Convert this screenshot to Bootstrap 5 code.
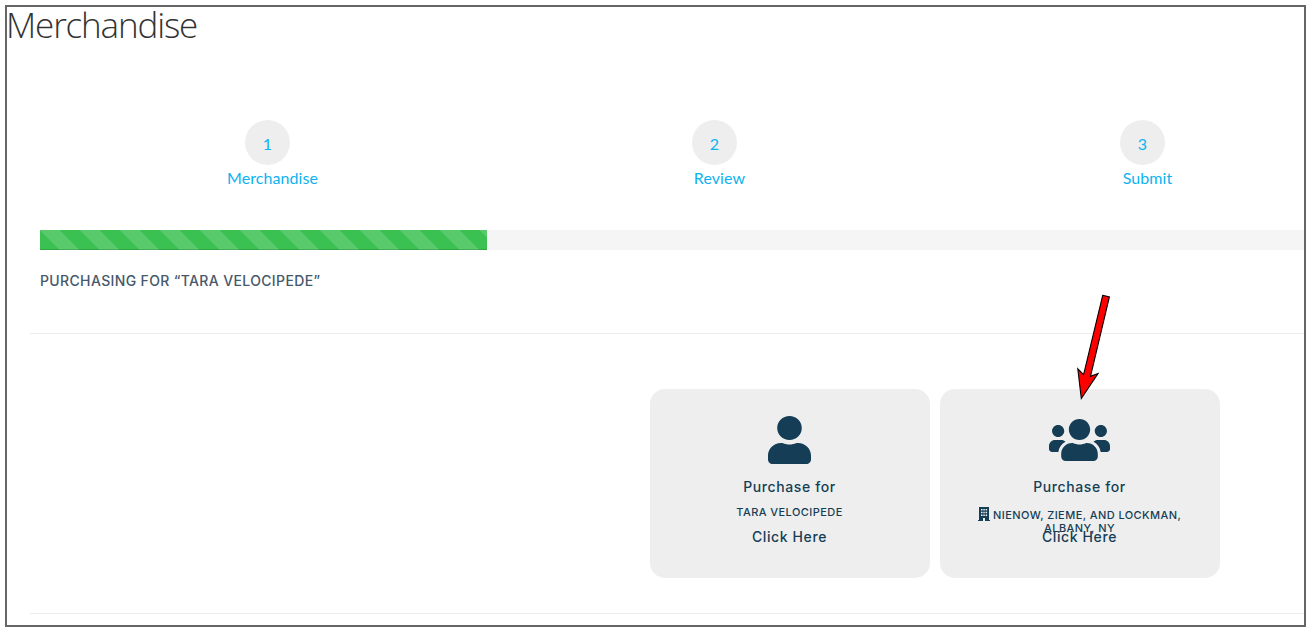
<!DOCTYPE html>
<html lang="en">
<head>
  <meta charset="UTF-8">
  <meta name="viewport" content="width=device-width, initial-scale=1.0">
  <title>Merchandise</title>
  <!-- Bootstrap CSS -->
  <link href="https://cdn.jsdelivr.net/npm/bootstrap@5.3.0/dist/css/bootstrap.min.css" rel="stylesheet">
  <style>
    body {
      height: 100vh;
      padding: 5px;
      background-color: #fff;
      font-family: "Lato", sans-serif;
      overflow: hidden;
    }

    .page-frame {
      height: 622px;
      border: 2px solid #666;
    }

    .page-title {
      height: 113px;
      margin: 0 0 0 -1px;
      font-family: "Open Sans", sans-serif;
      font-size: 35px;
      font-weight: 300;
      line-height: 35px;
      letter-spacing: -1.15px;
      color: #333;
    }

    /* The wizard is wider than the frame and runs off its right edge */
    .wizard {
      width: 1341px;
      margin-left: 33px;
    }

    .steps {
      display: grid;
      grid-template-columns: 465px 429px 427px;
      height: 110px;
    }

    .step {
      font-size: 16px;
      line-height: 20px;
      letter-spacing: 0.08px;
      color: #0db3f0;
      text-decoration: none;
    }

    .step-number {
      width: 45px;
      height: 45px;
      margin-right: 10px;
      margin-bottom: 3px;
      padding-top: 3px;
      background-color: #eee;
    }

    .wizard .progress {
      height: 20px;
      background-color: #f5f5f5;
    }

    .wizard .progress-bar {
      background-color: #3bc151;
      background-size: 40px 40px;
      box-shadow: inset 0 -1px 0 rgba(0, 0, 0, 0.15);
    }

    .heading-font {
      font-family: "Inter", sans-serif;
      font-weight: 500;
    }

    .purchasing {
      height: 83px;
      padding-top: 21px;
      margin: 0;
      font-size: 14px;
      line-height: 20px;
      letter-spacing: 0.36px;
      color: #46586a;
    }

    .divider {
      height: 1px;
      margin-left: 23px;
      background-color: #ececec;
    }

    .choices {
      height: 279px;
      gap: 10px;
      padding-top: 55px;
      padding-left: 643px;
    }

    .choice {
      width: 280px;
      height: 189px;
      padding-top: 27px;
      padding-right: 1px;
      border-radius: 15px;
      background-color: #eee;
      color: #153e56;
      text-decoration: none;
    }

    .choice-icon {
      height: 48px;
      fill: #153e56;
    }

    .choice-line {
      font-size: 14px;
      line-height: 20px;
      letter-spacing: 0.6px;
    }

    .choice-icon + .choice-line {
      margin-top: 13px;
    }

    .choice-name {
      height: 30px;
      width: 240px;
      padding-top: 9px;
      font-size: 11px;
      line-height: 13px;
      letter-spacing: 0.43px;
    }

    .choice-name.with-icon {
      padding-top: 12px;
    }

    .name-icon {
      width: 12px;
      height: 14px;
      margin: -5px 0 0 0;
      fill: #153e56;
    }

    .pointer {
      top: 290px;
      left: 1070px;
      width: 45px;
      height: 115px;
    }
  </style>
</head>
<body>
  <div class="page-frame overflow-hidden">
    <h1 class="page-title">Merchandise</h1>

    <div class="wizard">
      <div class="steps">
        <a href="#" class="step d-flex flex-column align-items-center">
          <span class="step-number rounded-circle d-flex align-items-center justify-content-center">1</span>
          <span>Merchandise</span>
        </a>
        <a href="#" class="step d-flex flex-column align-items-center">
          <span class="step-number rounded-circle d-flex align-items-center justify-content-center">2</span>
          <span>Review</span>
        </a>
        <a href="#" class="step d-flex flex-column align-items-center">
          <span class="step-number rounded-circle d-flex align-items-center justify-content-center">3</span>
          <span>Submit</span>
        </a>
      </div>

      <div class="progress rounded-0">
        <div class="progress-bar progress-bar-striped" role="progressbar" style="width: 33.33%"></div>
      </div>

      <h2 class="purchasing heading-font">PURCHASING FOR “TARA VELOCIPEDE”</h2>
    </div>

    <div class="divider"></div>

    <div class="choices d-flex align-items-start">
      <a href="#" class="choice heading-font d-flex flex-column align-items-center text-center flex-shrink-0">
        <svg class="choice-icon flex-shrink-0" width="43" viewBox="0 0 448 512" preserveAspectRatio="none"><path d="M224 256c70.7 0 128-57.3 128-128S294.7 0 224 0 96 57.3 96 128s57.3 128 128 128zm89.6 32h-16.7c-22.2 10.2-46.9 16-72.9 16s-50.6-5.8-72.9-16h-16.7C60.2 288 0 348.2 0 422.4V464c0 26.5 21.5 48 48 48h352c26.5 0 48-21.5 48-48v-41.6c0-74.2-60.2-134.4-134.4-134.4z"/></svg>
        <div class="choice-line">Purchase for</div>
        <div class="choice-name">TARA VELOCIPEDE</div>
        <div class="choice-line">Click Here</div>
      </a>
      <a href="#" class="choice heading-font d-flex flex-column align-items-center text-center flex-shrink-0">
        <svg class="choice-icon flex-shrink-0" width="61" viewBox="0 0 640 512" preserveAspectRatio="none"><path d="M96 224c35.3 0 64-28.7 64-64s-28.7-64-64-64-64 28.7-64 64 28.7 64 64 64zm448 0c35.3 0 64-28.7 64-64s-28.7-64-64-64-64 28.7-64 64 28.7 64 64 64zm32 32h-64c-17.6 0-33.5 7.1-45.1 18.6 40.3 22.1 68.9 62 75.1 109.4h66c17.7 0 32-14.3 32-32v-32c0-35.3-28.7-64-64-64zm-256 0c61.9 0 112-50.1 112-112S381.9 32 320 32 208 82.1 208 144s50.1 112 112 112zm76.8 32h-8.3c-20.8 10-43.9 16-68.5 16s-47.6-6-68.5-16h-8.3C179.6 288 128 339.6 128 403.2V432c0 26.5 21.5 48 48 48h288c26.5 0 48-21.5 48-48v-28.8c0-63.6-51.6-115.2-115.2-115.2zm-223.7-13.4C161.5 263.1 145.6 256 128 256H64c-35.3 0-64 28.7-64 64v32c0 17.7 14.3 32 32 32h65.9c6.3-47.4 34.9-87.3 75.2-109.4z"/></svg>
        <div class="choice-line">Purchase for</div>
        <div class="choice-name with-icon">
          <svg class="name-icon" viewBox="0 0 12 14"><path fill-rule="evenodd" d="M1 0h10v13h1v1H7v-3H5v3H0v-1h1zM3 2v1.5h1.5V2zM5.3 2v1.5h1.5V2zM7.6 2v1.5h1.5V2zM3 4.8v1.5h1.5V4.8zM5.3 4.8v1.5h1.5V4.8zM7.6 4.8v1.5h1.5V4.8zM3 7.6v1.5h1.5V7.6zM5.3 7.6v1.5h1.5V7.6zM7.6 7.6v1.5h1.5V7.6z"/></svg>
          NIENOW, ZIEME, AND LOCKMAN,<br>ALBANY, NY
        </div>
        <div class="choice-line">Click Here</div>
      </a>
    </div>

    <div class="divider"></div>
  </div>

  <!-- Arrow over the company card -->
  <svg class="pointer position-absolute" viewBox="0 0 45 115"><path d="M32.7 5.3L39.4 7 20.5 86.3 28 83.6 11.3 108.5 7.8 78.8 13.6 84.7z" fill="#f00" stroke="#000" stroke-width="1.1"/></svg>

  <!-- Bootstrap JS -->
  <script src="https://cdn.jsdelivr.net/npm/bootstrap@5.3.0/dist/js/bootstrap.bundle.min.js"></script>
</body>
</html>
